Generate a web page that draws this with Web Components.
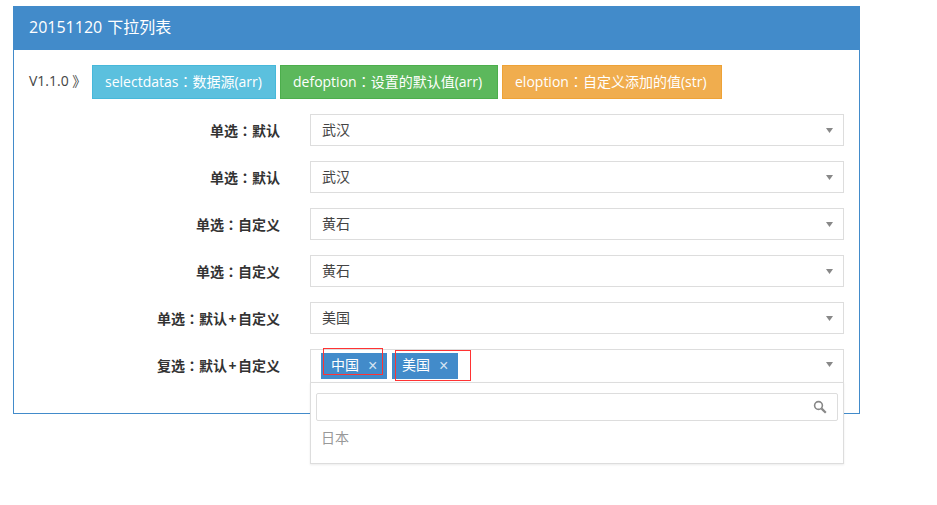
<!DOCTYPE html>
<html lang="zh">
<head>
<meta charset="UTF-8">
<title>20151120 下拉列表</title>
<style>
  body {
    margin: 0;
    padding: 6px 0 0 13px;
    box-sizing: border-box;
    min-height: 100vh;
    background: #fff;
    font-family: "Open Sans", "Noto Sans CJK SC", sans-serif;
    font-size: 14px;
    color: #333;
  }
  .colon { font-family: "Noto Sans CJK TC", sans-serif; }
</style>
</head>
<body>
<demo-panel heading="20151120 下拉列表">
  <version-bar>
    <info-badge kind="info">selectdatas<span class="colon" lang="zh-Hant">：</span>数据源(arr)</info-badge>
    <info-badge kind="success">defoption<span class="colon" lang="zh-Hant">：</span>设置的默认值(arr)</info-badge>
    <info-badge kind="warning">eloption<span class="colon" lang="zh-Hant">：</span>自定义添加的值(str)</info-badge>
  </version-bar>
  <form-row label="单选：默认"><single-select value="武汉"></single-select></form-row>
  <form-row label="单选：默认"><single-select value="武汉"></single-select></form-row>
  <form-row label="单选：自定义"><single-select value="黄石"></single-select></form-row>
  <form-row label="单选：自定义"><single-select value="黄石"></single-select></form-row>
  <form-row label="单选：默认+自定义"><single-select value="美国"></single-select></form-row>
  <form-row label="复选：默认+自定义">
    <multi-select>
      <select-tag outline="2,-5,60,27">中国</select-tag>
      <select-tag outline="3,-3,76,31">美国</select-tag>
    </multi-select>
  </form-row>
</demo-panel>

<script>
class DemoPanel extends HTMLElement {
  connectedCallback() {
    this.attachShadow({ mode: 'open' }).innerHTML = `
      <style>
        :host { display: block; width: 847px; height: 408px; box-sizing: border-box; border: 1px solid #428bca; border-top: 0; }
        header { height: 44px; margin: 0 -1px; padding: 0 16px; background: #428bca; color: #fff; font-size: 16px; line-height: 43px; word-spacing: 1px; }
        main { padding: 15px 15px 0 15px; }
      </style>
      <header>${this.getAttribute('heading')}</header>
      <main><slot></slot></main>`;
  }
}

class VersionBar extends HTMLElement {
  connectedCallback() {
    this.attachShadow({ mode: 'open' }).innerHTML = `
      <style>
        :host { display: flex; align-items: center; gap: 4px; height: 34px; margin-bottom: 15px; }
        span { width: 59px; margin-top: -4px; color: #444; white-space: nowrap; }
      </style>
      <span>V1.1.0 》</span>
      <slot></slot>`;
  }
}

class InfoBadge extends HTMLElement {
  connectedCallback() {
    this.attachShadow({ mode: 'open' }).innerHTML = `
      <style>
        :host { display: block; box-sizing: border-box; height: 34px; padding: 0 12px; border: 1px solid; color: #fff; line-height: 31px; white-space: nowrap; }
        :host([kind=info]) { background: #5bc0de; border-color: #46b8da; width: 184px; }
        :host([kind=success]) { background: #5cb85c; border-color: #4cae4c; width: 218px; }
        :host([kind=warning]) { background: #f0ad4e; border-color: #eea236; width: 220px; }
      </style>
      <slot></slot>`;
  }
}

class FormRow extends HTMLElement {
  connectedCallback() {
    const label = this.getAttribute('label')
      .replace('：', '<span lang="zh-Hant">：</span>')
      .replace('+', '<em>+</em>');
    this.attachShadow({ mode: 'open' }).innerHTML = `
      <style>
        :host { display: flex; align-items: flex-start; gap: 30px; height: 32px; margin-bottom: 15px; }
        label { width: 251px; height: 32px; flex: none; text-align: right; font-size: 14px; font-weight: 700; line-height: 32px; white-space: nowrap; color: #333; }
        label span { font-family: "Noto Sans CJK TC", sans-serif; }
        em { font-style: normal; padding: 0 1.5px; }
        div { flex: none; width: 534px; }
      </style>
      <label>${label}</label>
      <div><slot></slot></div>`;
  }
}

const ARROW = '<svg width="7" height="5" viewBox="0 0 7 5"><path d="M0 0H7L3.5 5Z" fill="#888"/></svg>';

class SingleSelect extends HTMLElement {
  connectedCallback() {
    this.attachShadow({ mode: 'open' }).innerHTML = `
      <style>
        :host { display: flex; align-items: center; justify-content: space-between; box-sizing: border-box; height: 32px; padding: 0 11px; border: 1px solid #ddd; font-size: 14px; color: #444; }
        span { margin-top: -2px; }
        svg { display: block; margin-right: -1px; margin-top: 1px; }
      </style>
      <span>${this.getAttribute('value')}</span>${ARROW}`;
  }
}

class MultiSelect extends HTMLElement {
  connectedCallback() {
    this.attachShadow({ mode: 'open' }).innerHTML = `
      <style>
        :host { display: block; position: relative; }
        .box { display: flex; align-items: center; gap: 5px; box-sizing: border-box; height: 34px; padding: 0 11px 0 10px; border: 1px solid #ddd; }
        .box svg { display: block; margin-left: auto; margin-right: -1px; margin-top: -3px; }
        .drop { position: absolute; left: 0; right: 0; top: 33px; z-index: 2; box-sizing: border-box; height: 82px; padding: 10px 5px 0; background: #fff; border: 1px solid #ddd; box-shadow: 0 1px 2px rgba(0,0,0,.08); }
        .search { display: flex; align-items: center; justify-content: flex-end; box-sizing: border-box; height: 28px; padding-right: 10px; border: 1px solid #ddd; border-radius: 2px; }
        .search svg { display: block; }
        .item { padding: 8px 5px; font-size: 14px; line-height: 17px; color: #999; }
      </style>
      <div class="box"><slot></slot>${ARROW}</div>
      <div class="drop">
        <div class="search">
          <svg width="14" height="14" viewBox="0 0 14 14" fill="none" stroke="#888"><circle cx="5.5" cy="5.5" r="3.9" stroke-width="1.6"/><path d="M8.6 8.6L12.8 12.8" stroke-width="2.2"/></svg>
        </div>
        <div class="item">日本</div>
      </div>`;
  }
}

class SelectTag extends HTMLElement {
  connectedCallback() {
    const [x, y, w, h] = this.getAttribute('outline').split(',');
    this.attachShadow({ mode: 'open' }).innerHTML = `
      <style>
        :host { display: flex; align-items: center; position: relative; box-sizing: border-box; width: 66px; height: 26px; padding-left: 10px; background: #428bca; color: #fff; font-size: 14px; }
        span { margin-top: -4px; }
        i { margin-left: 9px; font: 16px "Liberation Sans", sans-serif; color: #d5e4f2; }
        b { position: absolute; left: ${x}px; top: ${y}px; width: ${w}px; height: ${h}px; box-sizing: border-box; border: 1px solid #f33; }
      </style>
      <span><slot></slot></span><i>×</i><b></b>`;
  }
}

customElements.define('demo-panel', DemoPanel);
customElements.define('version-bar', VersionBar);
customElements.define('info-badge', InfoBadge);
customElements.define('form-row', FormRow);
customElements.define('single-select', SingleSelect);
customElements.define('multi-select', MultiSelect);
customElements.define('select-tag', SelectTag);
</script>
</body>
</html>
